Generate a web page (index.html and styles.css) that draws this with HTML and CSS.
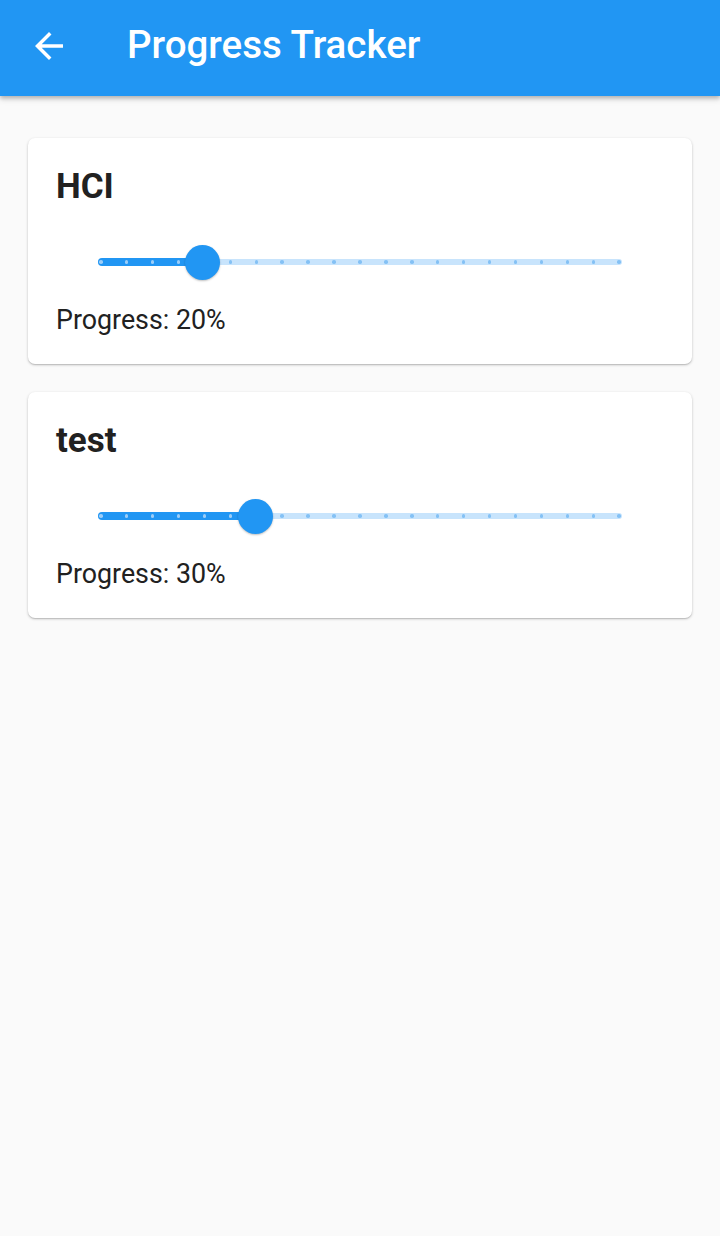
FILE: index.html
```html
<!DOCTYPE html>
<html lang="en">
<head>
<meta charset="utf-8">
<title>Progress Tracker</title>
<link rel="stylesheet" href="styles.css">
</head>
<body>
<header class="appbar">
  <button class="back" aria-label="Back">
    <svg viewBox="0 0 24 24" width="42" height="42"><path fill="#fff" d="M20 11H7.83l5.59-5.59L12 4l-8 8 8 8 1.41-1.41L7.83 13H20v-2z"/></svg>
  </button>
  <h1 class="title">Progress Tracker</h1>
</header>
<main class="list">
  <section class="card">
    <h2 class="card-title">HCI</h2>
    <div class="slider">
      <div class="track">
        <div class="active" style="width: 20%"></div>
        <div class="ticks">
          <i class="on"></i><i class="on"></i><i class="on"></i><i class="on"></i><i class="on"></i>
          <i></i><i></i><i></i><i></i><i></i><i></i><i></i><i></i><i></i><i></i><i></i><i></i><i></i><i></i><i></i><i></i>
        </div>
        <div class="thumb" style="left: 20%"></div>
      </div>
    </div>
    <p class="progress">Progress: 20%</p>
  </section>
  <section class="card">
    <h2 class="card-title">test</h2>
    <div class="slider">
      <div class="track">
        <div class="active" style="width: 30%"></div>
        <div class="ticks">
          <i class="on"></i><i class="on"></i><i class="on"></i><i class="on"></i><i class="on"></i><i class="on"></i><i class="on"></i>
          <i></i><i></i><i></i><i></i><i></i><i></i><i></i><i></i><i></i><i></i><i></i><i></i><i></i><i></i>
        </div>
        <div class="thumb" style="left: 30%"></div>
      </div>
    </div>
    <p class="progress">Progress: 30%</p>
  </section>
</main>
</body>
</html>
```
FILE: styles.css
```css
* { box-sizing: border-box; }
html, body {
  margin: 0;
  padding: 0;
  background: #fafafa;
  font-family: Roboto, "Liberation Sans", sans-serif;
  color: #212121;
}
body { min-height: 1236px; }

.appbar {
  height: 96px;
  background: #2196f3;
  display: flex;
  align-items: flex-start;
  box-shadow: 0 2px 4px rgba(0,0,0,0.22), 0 4px 6px rgba(0,0,0,0.10);
  position: relative;
  z-index: 1;
}
.back {
  width: 98px;
  height: 42px;
  margin-top: 25px;
  padding: 0 0 0 28px;
  border: 0;
  background: transparent;
  display: flex;
  align-items: center;
}
.back svg { display: block; }
.title {
  margin: 22px 0 0 29px;
  font-size: 38.5px;
  line-height: 45px;
  font-weight: 500;
  color: #fff;
}

.list {
  padding: 42px 28px;
  display: flex;
  flex-direction: column;
  gap: 28px;
}
.card {
  background: #fff;
  border-radius: 7px;
  box-shadow: 0 1px 3px rgba(0,0,0,0.2), 0 1px 1px rgba(0,0,0,0.12);
  padding: 28px 28px 28px;
}
.card-title {
  margin: 0 0 13px;
  font-size: 35px;
  line-height: 41px;
  font-weight: 700;
  color: #212121;
}
.slider {
  height: 84px;
  padding: 0 42px;
  display: flex;
  align-items: center;
}
.track {
  position: relative;
  flex: 1;
  height: 6px;
  border-radius: 3px;
  background: #c8e4fc;
}
.active {
  position: absolute;
  left: 0;
  top: -1px;
  height: 8px;
  border-radius: 4px;
  background: #2196f3;
}
.ticks {
  position: absolute;
  left: 1px;
  right: 1px;
  top: 1px;
  height: 4px;
  display: flex;
  justify-content: space-between;
  align-items: center;
}
.ticks i {
  width: 3.5px;
  height: 3.5px;
  border-radius: 50%;
  background: #84c1f5;
}
.ticks i.on { background: #9ccdf8; }
.thumb {
  position: absolute;
  top: 50%;
  width: 35px;
  height: 35px;
  margin: -17.5px 0 0 -17.5px;
  border-radius: 50%;
  background: #2196f3;
  box-shadow: 0 1px 2px rgba(0,0,0,0.25);
}
.progress {
  margin: 0;
  font-size: 26.8px;
  line-height: 32px;
  font-weight: 400;
  color: #212121;
}
```
